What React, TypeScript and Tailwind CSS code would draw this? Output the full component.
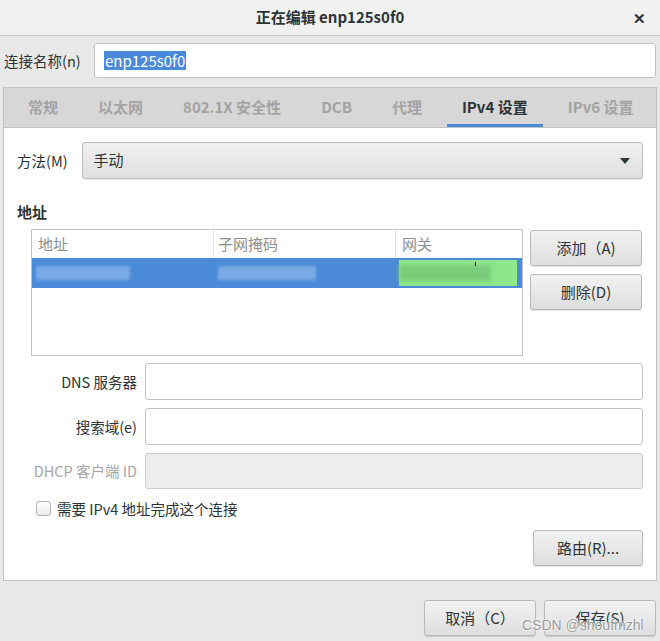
import React from 'react';

const tabs = ['常规', '以太网', '802.1X 安全性', 'DCB', '代理', 'IPv4 设置', 'IPv6 设置'];

const btn =
  'flex items-center justify-center rounded-[3px] border border-[#b9b9b9] bg-gradient-to-b from-[#f2f2f2] to-[#dedede] text-[15px] text-[#2e3436] shadow-[0_1px_1px_rgba(0,0,0,0.12)]';

const field = 'h-[37px] rounded-[3px] border border-[#c3c3c3] bg-white';

export default function App() {
  return (
    <div className="relative flex h-[641px] w-[660px] flex-col overflow-hidden bg-[#e8e8e8] font-['Noto_Sans_CJK_SC',sans-serif] text-[#2e3436]">
      {/* title bar */}
      <div className="relative flex h-[36px] shrink-0 items-center justify-center border-b border-[#c6c6c6] bg-[#f1f1f1]">
        <span className="text-[15px] font-bold">正在编辑 enp125s0f0</span>
        <span className="absolute right-[14px] top-[7px] text-[15px] font-bold">✕</span>
      </div>

      {/* connection name */}
      <div className="mt-[7px] flex h-[35px] items-center">
        <span className="w-[94px] pl-[4px] text-[14.5px]">连接名称(n)</span>
        <div className="flex h-[35px] w-[562px] items-center rounded-[3px] border border-[#c3c3c3] bg-white pl-[9px]">
          <span className="bg-[#4a8ad8] px-[1px] text-[15px] leading-[19px] text-white">enp125s0f0</span>
        </div>
      </div>

      {/* notebook */}
      <div className="mx-[3px] mt-[9px] flex h-[494px] w-[654px] flex-col border border-[#c3c3c3] bg-white">
        <div className="flex h-[40px] shrink-0 items-stretch gap-[10px] border-b border-[#c3c3c3] bg-[#d7d7d7] pl-[9px]">
          {tabs.map((t) => (
            <div
              key={t}
              className={
                t === 'IPv4 设置'
                  ? 'flex items-center border-b-[3px] border-[#4a8ad8] px-[15px] pt-[3px] text-[15px] font-bold text-[#2e3436]'
                  : 'flex items-center px-[15px] text-[15px] font-bold text-[#a3a3a3]'
              }
            >
              {t}
            </div>
          ))}
        </div>

        <div className="flex flex-1 flex-col pl-[13px] pr-[13px] pt-[14px]">
          {/* method */}
          <div className="flex items-center gap-[14px]">
            <span className="text-[14.5px]">方法(M)</span>
            <div className="flex h-[37px] flex-1 items-center justify-between rounded-[3px] border border-[#bdbdbd] bg-gradient-to-b from-[#f0f0f0] to-[#e0e0e0] pl-[11px] pr-[12px] shadow-[0_1px_1px_rgba(0,0,0,0.1)]">
              <span className="text-[15px]">手动</span>
              <svg width="10" height="6" viewBox="0 0 10 6">
                <path d="M0 0 L10 0 L5 6 Z" fill="#2e3436" />
              </svg>
            </div>
          </div>

          <div className="mt-[23px] text-[15px] font-bold leading-[20px]">地址</div>

          {/* address table */}
          <div className="mt-[7px] flex gap-[7px] pl-[14px]">
            <div className="flex h-[127px] w-[492px] flex-col border border-[#c3c3c3] bg-white">
              <div className="flex h-[28px] shrink-0 text-[15px] text-[#8e8e8e]">
                <div className="w-[182px] border-r border-[#e6e6e6] pl-[6px] leading-[28px]">地址</div>
                <div className="w-[182px] border-r border-[#e6e6e6] pl-[4px] leading-[28px]">子网掩码</div>
                <div className="flex-1 pl-[6px] leading-[28px]">网关</div>
              </div>
              <div className="flex h-[30px] items-center bg-[#4a8ad8]">
                <div className="w-[182px] pl-[4px]">
                  <div className="h-[14px] w-[94px] bg-[#79a9e6] blur-[1.5px]" />
                </div>
                <div className="w-[182px] pl-[4px]">
                  <div className="h-[14px] w-[98px] bg-[#7aaae5] blur-[1.5px]" />
                </div>
                <div className="relative ml-[3px] flex h-[26px] w-[118px] items-center bg-[#8de88b]">
                  <div className="h-[16px] w-[92px] bg-[#79cc79] blur-[2px]" />
                  <div className="absolute left-[76px] top-[2px] h-[4px] w-[1px] bg-black" />
                </div>
              </div>
            </div>
            <div className="flex flex-col gap-[8px] pt-[1px]">
              <div className={`${btn} h-[36px] w-[112px]`}>添加（A)</div>
              <div className={`${btn} h-[36px] w-[112px]`}>删除(D)</div>
            </div>
          </div>

          {/* fields */}
          <div className="mt-[7px] grid grid-cols-[120px_1fr] items-center gap-x-[8px] gap-y-[8px]">
            <span className="text-right text-[14.5px]">DNS 服务器</span>
            <div className={field} />
            <span className="text-right text-[14.5px]">搜索域(e)</span>
            <div className={`${field} h-[36px]`} />
            <span className="text-right text-[14.5px] text-[#a6a6a6]">DHCP 客户端 ID</span>
            <div className="h-[36px] rounded-[3px] border border-[#cbcbcb] bg-[#ededed]" />
          </div>

          <div className="mt-[9px] flex items-center gap-[6px] pl-[19px]">
            <div className="h-[15px] w-[15px] rounded-[3px] border border-[#b3b3b3] bg-gradient-to-b from-white to-[#ececec]" />
            <span className="text-[14.5px]">需要 IPv4 地址完成这个连接</span>
          </div>

          <div className="mt-[10px] flex justify-end">
            <div className={`${btn} h-[36px] w-[110px]`}>路由(R)...</div>
          </div>
        </div>
      </div>

      {/* bottom buttons */}
      <div className="mt-[19px] flex justify-end gap-[8px] pr-[4px]">
        <div className={`${btn} h-[36px] w-[112px]`}>取消（C）</div>
        <div className={`${btn} h-[36px] w-[112px]`}>保存(S)</div>
      </div>

      <span className="absolute left-[522px] top-[615px] font-['Liberation_Sans',sans-serif] text-[14px] text-[#9a9a9a] [text-shadow:0_0_2px_#ffffff,0_0_2px_#ffffff]">
        CSDN @shoufmzhl
      </span>
    </div>
  );
}
